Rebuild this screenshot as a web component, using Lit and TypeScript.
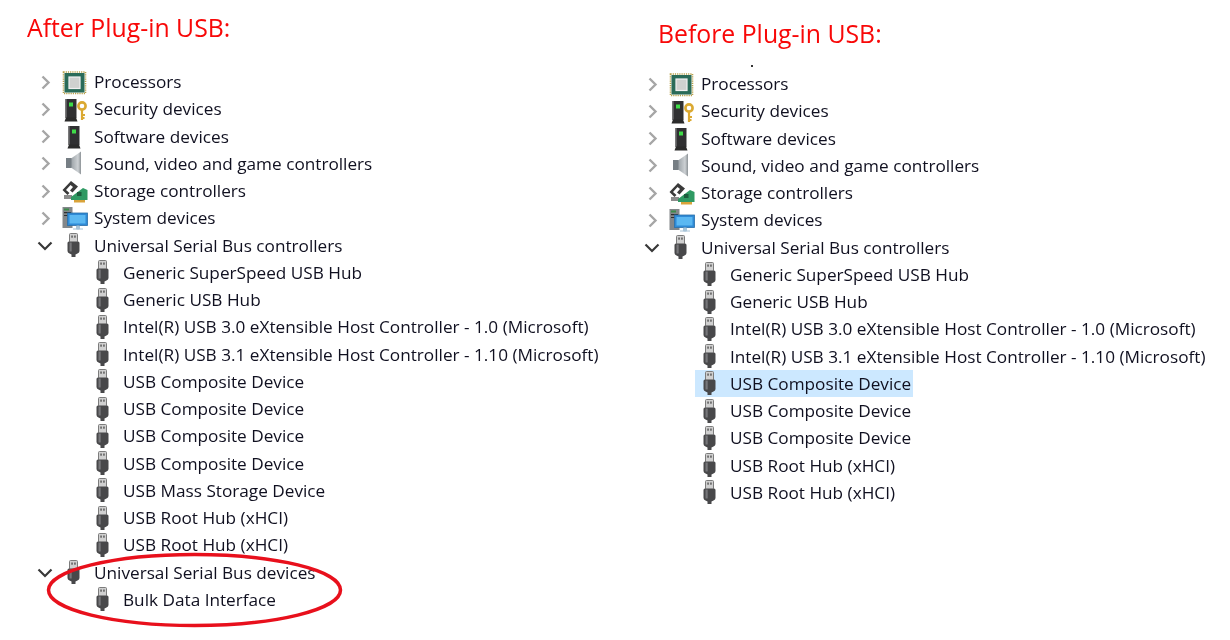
import { LitElement, html, css, svg } from "lit";
import { customElement } from "lit/decorators.js";

type Icon = "cpu" | "sec" | "soft" | "sound" | "storage" | "system" | "usb";
interface Row { label: string; icon: Icon; exp?: "open" | "closed"; child?: boolean; hi?: boolean }

const tower = (x: number) => svg`<rect x="${x}" y="3" width="11" height="19" fill="#303032"/>
  <rect x="${x}" y="3" width="1.500" height="19" fill="#5c5c5e"/>
  <rect x="${x + 3.5}" y="6.500" width="4" height="4" fill="#3fdc48"/>
  <path d="M${x - 1} 25.500 l1.500-4 h10 l1.500 4z" fill="#2b2b2b"/>`;

const ICONS: Record<Icon, unknown> = {
  cpu: svg`<rect x="1.500" y="3" width="22" height="21.500" fill="none" stroke="#b8a04a" stroke-width="1.600" stroke-dasharray="1.200 1"/>
    <rect x="2.500" y="4" width="20" height="19.500" fill="#2a6b58"/>
    <rect x="7" y="8" width="11" height="11.500" fill="#cfd1cf" stroke="#f0f0f0" stroke-width="1.200"/>`,
  sec: svg`${tower(3.5)}
    <circle cx="20" cy="10" r="3.600" fill="none" stroke="#dba932" stroke-width="2.600"/>
    <path d="M20 13 v11 M20 19 h3 M20 22 h2.500" stroke="#dba932" stroke-width="2.200" fill="none"/>`,
  soft: svg`${tower(6.5)}`,
  sound: svg`<defs><linearGradient id="sg" x1="0" x2="1" y1="0" y2="0"><stop offset="0" stop-color="#9aa1a6"/><stop offset=".7" stop-color="#cdd1d4"/><stop offset="1" stop-color="#8d9397"/></linearGradient></defs>
    <path d="M9 8.500 L19 1.500 V24.500 L9 17.500z" fill="url(#sg)"/><rect x="4" y="8" width="5.500" height="10" fill="#767e84"/>`,
  storage: svg`<path d="M9 3 l7 5.500 -5.500 6 -2.500-2 3-3.500 -2.500-2 -4.500 5 3.500 3 -2 2 -5-5z" fill="#3a3a3a"/>
    <path d="M2 17 h8 v4 h-8z" fill="#8c8c8c"/>
    <path d="M9 19 L21 10 L25.500 12 V22 H9z" fill="#2f9a63"/>
    <rect x="12" y="22" width="11" height="2.500" fill="#d9a33a"/><rect x="15" y="14" width="4.500" height="4" fill="#1c5d3d"/>`,
  system: svg`<rect x="0.500" y="2" width="10" height="21" fill="#83878a"/><rect x="2" y="3.500" width="5" height="2" fill="#3c8a4a"/><rect x="2" y="7" width="7" height="1.200" fill="#2f2f2f"/><rect x="2" y="10" width="4" height="1" fill="#2f2f2f"/>
    <rect x="5.500" y="8" width="20" height="12.500" fill="#2f8ad6" stroke="#2a6fa8" stroke-width=".8"/><rect x="7.500" y="10" width="16" height="8.500" fill="#5bb8f2"/>
    <path d="M11 24 h10 M14.500 21 h3 v3 h-3z" stroke="#a8c4d8" fill="#a8c4d8" stroke-width="1"/>`,
  usb: svg`<rect x="7.500" y="1.500" width="8" height="9" rx="1" fill="#d0d0d0" stroke="#7c7c7c" stroke-width="1"/>
    <rect x="9.300" y="3.500" width="1.500" height="2.200" fill="#5a5a5a"/><rect x="12.200" y="3.500" width="1.500" height="2.200" fill="#5a5a5a"/>
    <path d="M5.500 11 q0-1.500 1.500-1.500 h9 q1.500 0 1.500 1.500 v8 q0 1.500-2 2.500 l-2 1 v2.500 h-4 v-2.500 l-2-1 q-2-1-2-2.500z" fill="#48484a"/>
    <rect x="7.500" y="10.500" width="2.200" height="9" fill="#77777a"/>`,
};

const common: Row[] = [
  { label: "Processors", icon: "cpu", exp: "closed" },
  { label: "Security devices", icon: "sec", exp: "closed" },
  { label: "Software devices", icon: "soft", exp: "closed" },
  { label: "Sound, video and game controllers", icon: "sound", exp: "closed" },
  { label: "Storage controllers", icon: "storage", exp: "closed" },
  { label: "System devices", icon: "system", exp: "closed" },
  { label: "Universal Serial Bus controllers", icon: "usb", exp: "open" },
  { label: "Generic SuperSpeed USB Hub", icon: "usb", child: true },
  { label: "Generic USB Hub", icon: "usb", child: true },
  { label: "Intel(R) USB 3.0 eXtensible Host Controller - 1.0 (Microsoft)", icon: "usb", child: true },
  { label: "Intel(R) USB 3.1 eXtensible Host Controller - 1.10 (Microsoft)", icon: "usb", child: true },
];
const c = (label: string, hi = false): Row => ({ label, icon: "usb", child: true, hi });

const after: Row[] = [
  ...common,
  c("USB Composite Device"), c("USB Composite Device"), c("USB Composite Device"), c("USB Composite Device"),
  c("USB Mass Storage Device"), c("USB Root Hub (xHCI)"), c("USB Root Hub (xHCI)"),
  { label: "Universal Serial Bus devices", icon: "usb", exp: "open" },
  c("Bulk Data Interface"),
];
const before: Row[] = [
  ...common,
  c("USB Composite Device", true), c("USB Composite Device"), c("USB Composite Device"),
  c("USB Root Hub (xHCI)"), c("USB Root Hub (xHCI)"),
];

@customElement("app-root")
export class AppRoot extends LitElement {
  static styles = css`
    :host { display: block; position: relative; width: 1230px; height: 640px; overflow: hidden; background: #fff;
      font-family: "Open Sans", "Noto Sans", sans-serif; }
    .cols { display: grid; grid-template-columns: 607px 623px; filter: blur(0.4px); }
    .title { color: #f80808; font-size: 24.8px; line-height: 32px; padding-left: 27px; white-space: nowrap; }
    .left .title { padding-top: 11px; padding-bottom: 25px; }
    .right .title { padding-top: 17px; padding-left: 51px; padding-bottom: 21px; }
    .row { display: flex; align-items: center; height: 27.26px; padding-left: 36px; }
    .chev { width: 18px; height: 16px; flex: none; margin-right: 5px; }
    .content { display: flex; align-items: center; height: 27px; padding: 0 2px 0 3px; }
    .child .content { margin-left: 29px; }
    .hi .content { background: #cce8ff; }
    .icon { width: 26px; height: 26px; flex: none; margin-right: 6px; }
    .label { font-size: 17.2px; color: #101020; white-space: nowrap; }
    .ring { position: absolute; left: 0; top: 0; pointer-events: none; }
    .speck { position: absolute; left: 751px; top: 65px; width: 2px; height: 2px; background: #333; }
  `;

  private chevron(exp?: "open" | "closed") {
    return html`<svg class="chev" viewBox="0 0 18 16">
      ${exp === "closed"
        ? svg`<path d="M6.500 2.500 L12.500 8.500 L6.500 14.500" fill="none" stroke="#a6a6a6" stroke-width="2.400"/>`
        : exp === "open"
          ? svg`<path d="M2.500 5.500 L9 12 L15.500 5.500" fill="none" stroke="#383838" stroke-width="2.200"/>`
          : null}
    </svg>`;
  }

  private tree(rows: Row[]) {
    return rows.map(r => html`<div class="row ${r.child ? "child" : ""} ${r.hi ? "hi" : ""}">
      ${this.chevron(r.exp)}
      <div class="content">
        <svg class="icon" viewBox="0 0 26 26">${ICONS[r.icon]}</svg>
        <span class="label">${r.label}</span>
      </div>
    </div>`);
  }

  render() {
    return html`
      <div class="cols">
        <section class="left"><div class="title">After Plug-in USB:</div>${this.tree(after)}</section>
        <section class="right"><div class="title">Before Plug-in USB:</div>${this.tree(before)}</section>
      </div>
      <div class="speck"></div>
      <svg class="ring" width="1230" height="640" viewBox="0 0 1230 640">
        <ellipse cx="194.500" cy="590" rx="146" ry="35.500" fill="none" stroke="#e8101c" stroke-width="3.500"/>
      </svg>`;
  }
}
